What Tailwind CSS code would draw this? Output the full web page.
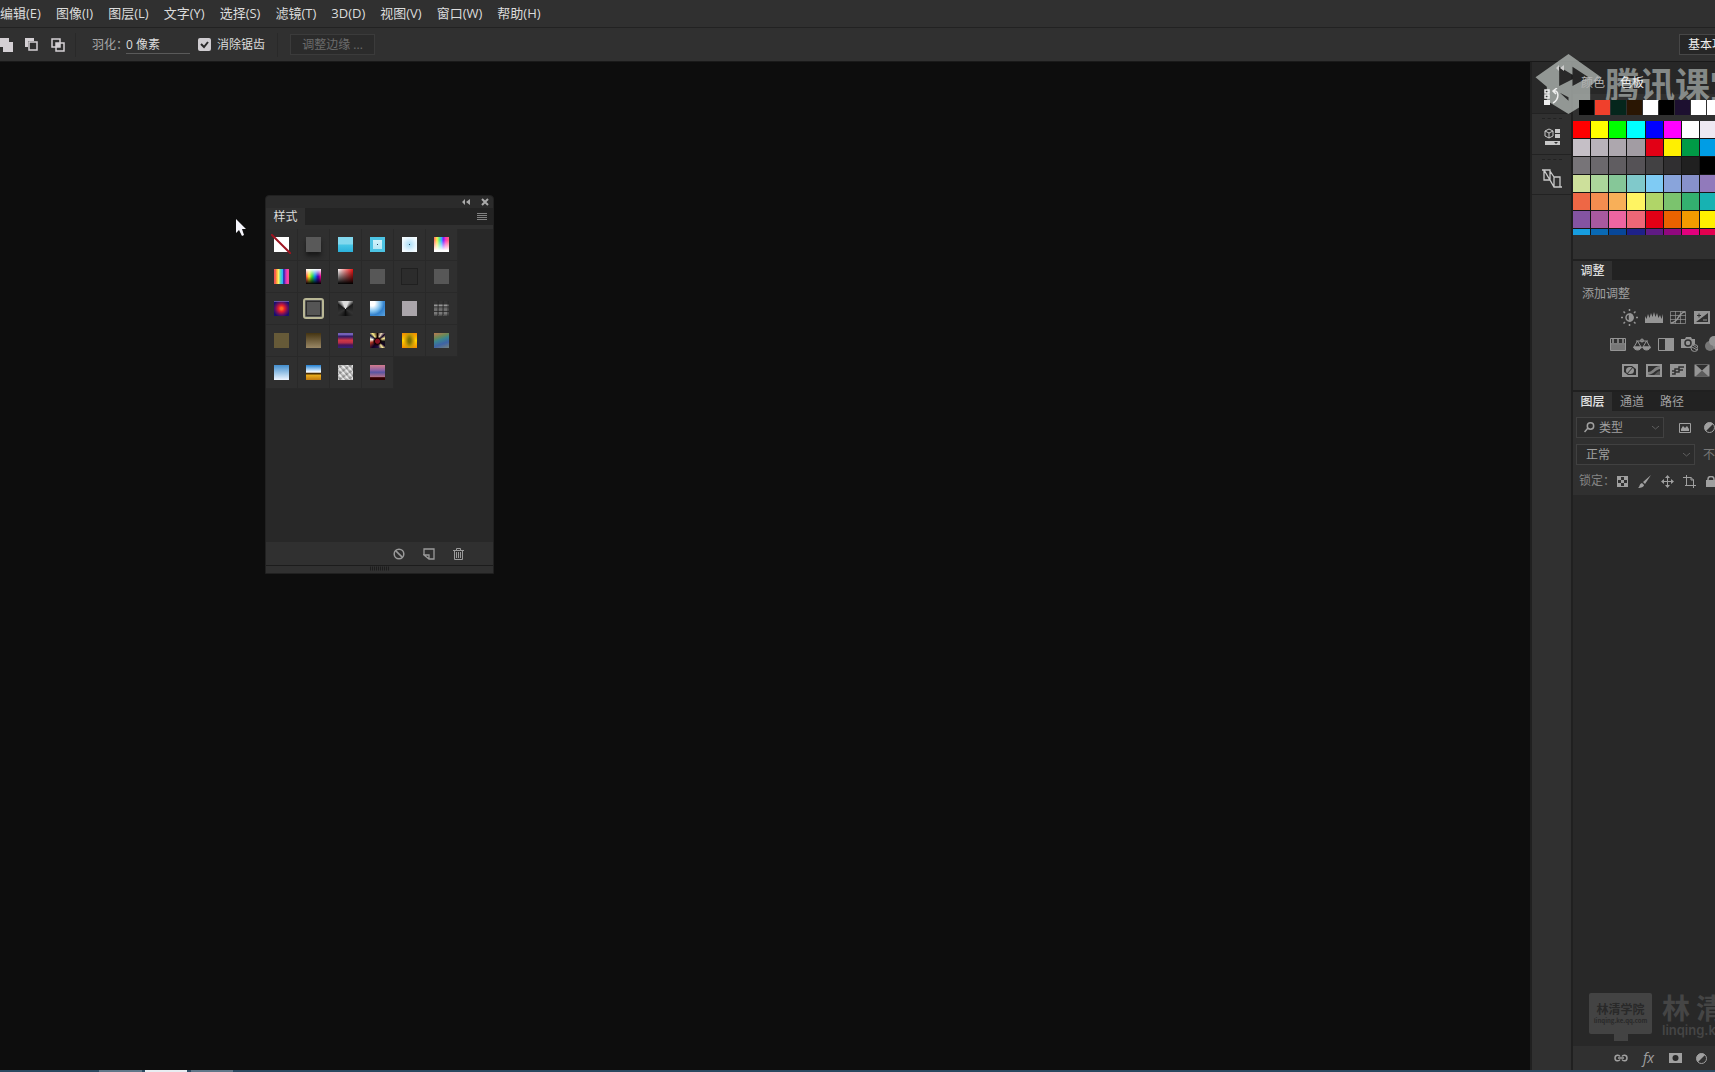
<!DOCTYPE html>
<html lang="zh-CN">
<head>
<meta charset="utf-8">
<title>样式面板</title>
<script src="https://cdn.jsdelivr.net/npm/@tailwindcss/browser@4"></script>
</head>
<body class="flex h-screen flex-col overflow-hidden bg-[#0d0d0d] font-['Open_Sans','Noto_Sans_CJK_SC',sans-serif] text-[12px] leading-4 text-[#dcdcdc] select-none">

<!-- Menu bar -->
<nav class="flex h-7 shrink-0 items-center gap-[15px] whitespace-nowrap border-b border-[#222] bg-[#303030] pb-[2px] text-[13px]">
  <a href="#">编辑(E)</a><a href="#">图像(I)</a><a href="#">图层(L)</a><a href="#">文字(Y)</a><a href="#">选择(S)</a><a href="#">滤镜(T)</a><a href="#">3D(D)</a><a href="#">视图(V)</a><a href="#">窗口(W)</a><a href="#">帮助(H)</a>
</nav>

<!-- Tool options -->
<header class="flex h-[34px] shrink-0 items-center overflow-hidden whitespace-nowrap border-b border-[#191919] bg-[#303030]">
  <div class="flex items-center gap-3 text-[#d4d0d4]">
    <button aria-label="添加到选区" class="h-[14px] w-[13px]"><svg class="h-full w-full" viewBox="0 0 13 14"><path d="M0 0h9v4h4v10H3V9H0z" fill="currentColor"/></svg></button>
    <button aria-label="从选区减去" class="size-[13px]"><svg class="size-full" viewBox="0 0 13 13"><path d="M0 0h9v3H3v6H0z" fill="currentColor"/><path d="M4 4h8v8H4z" fill="none" stroke="currentColor" stroke-width="1.5"/></svg></button>
    <button aria-label="与选区交叉" class="ml-px size-[14px]"><svg class="size-full" viewBox="0 0 14 14"><path d="M1 1h8v8H1zM5 5h8v8H5z" fill="none" stroke="currentColor" stroke-width="1.5"/><path d="M5 5h4v4H5z" fill="currentColor"/></svg></button>
  </div>
  <div class="ml-[10px] h-6 w-px bg-[#292929]"></div>
  <label for="feather" class="ml-[16px] text-[#a8a8a8]">羽化：</label>
  <input id="feather" value="0 像素" class="-ml-[2px] h-[18px] w-[64px] border-b border-[#5a5a5a] bg-transparent outline-none">
  <label class="ml-[8px] flex items-center gap-[6px]">
    <span class="grid size-[13px] place-items-center">
      <input type="checkbox" checked class="col-start-1 row-start-1 size-[13px] appearance-none rounded-[2px] bg-[#cfccd0]">
      <svg class="pointer-events-none col-start-1 row-start-1 size-[11px]" viewBox="0 0 11 11"><path d="M2 5l3 3 4-5" fill="none" stroke="#282828" stroke-width="2"/></svg>
    </span>消除锯齿
  </label>
  <div class="ml-3 h-6 w-px bg-[#292929]"></div>
  <button class="ml-3 h-[21px] w-[85px] border border-[#3b3b3b] bg-[#2b2b2b] text-[#6b6b6b]">调整边缘 ...</button>
  <div class="ml-auto w-[36px] overflow-hidden"><button class="block h-[21px] w-[100px] border border-[#474747] bg-[#262626] pl-2 text-left text-[#eee]">基本功能</button></div>
</header>

<main class="flex min-h-0 flex-1">
  <!-- Canvas -->
  <section class="relative min-w-0 flex-1">
    <svg class="absolute top-[157px] left-[235px] h-[18px] w-3" viewBox="0 0 12 18"><path d="M1 0v14l3-3 3 6 2-1-2-6h4z" fill="#f4f4fa"/></svg>

    <!-- Styles panel -->
    <div class="absolute top-[133px] left-[265px] flex h-[379px] w-[229px] flex-col rounded-t-[4px] border border-[#202020] bg-[#282828]">
      <div class="flex h-[12px] items-center justify-end gap-[11px] rounded-t-[4px] bg-[#2b2b2b] pr-[4px] text-[#aaa]">
        <button aria-label="折叠" class="w-2"><svg class="h-2 w-2" viewBox="0 0 8 8"><path d="M0 4l3-3v6zM4 4l4-3v6z" fill="currentColor"/></svg></button>
        <button aria-label="关闭" class="w-2"><svg class="h-2 w-2" viewBox="0 0 8 8"><path d="M1 1l6 6M7 1L1 7" stroke="currentColor" stroke-width="2"/></svg></button>
      </div>
      <div class="flex h-[17px] items-center justify-between bg-[#232323] pr-[6px]">
        <button class="h-full w-[39px] bg-[#303030] text-[#ddd]">样式</button>
        <button aria-label="面板菜单"><svg class="h-2 w-[10px]" viewBox="0 0 10 8"><path d="M0 .5h10M0 2.5h10M0 4.5h10M0 6.5h10" stroke="#838383"/></svg></button>
      </div>
      <div class="h-1 bg-[#303030]"></div>
      <div id="styles" class="flex flex-1 flex-wrap content-start pr-[34px]"></div>
      <div class="flex h-6 items-center justify-end gap-[18px] border-b border-[#1c1c1c] bg-[#303030] pr-[29px] text-[#9a9a9a]">
        <button aria-label="清除样式"><svg class="size-3" viewBox="0 0 12 12" fill="none" stroke="currentColor" stroke-width="1.5"><circle cx="6" cy="6" r="4.8"/><path d="M2.6 2.6l6.8 6.8"/></svg></button>
        <button aria-label="新建样式"><svg class="size-3" viewBox="0 0 12 12" fill="none" stroke="currentColor" stroke-width="1.3"><path d="M1 7V1h10v10H6L1 7h5v4"/></svg></button>
        <button aria-label="删除样式"><svg class="h-3 w-[11px]" viewBox="0 0 11 12" fill="none" stroke="currentColor"><path d="M0 2.5h11M3.5 2.5v-2h4v2M1.5 2.5v9h8v-9M3.5 4v6M5.5 4v6M7.5 4v6"/></svg></button>
      </div>
      <div class="flex h-[7px] justify-center bg-[#303030]"><svg class="h-[5px] w-5" viewBox="0 0 20 5"><path d="M0 2.5h20" stroke="#1d1d1d" stroke-width="4" stroke-dasharray="1 1"/></svg></div>
    </div>
  </section>

  <!-- Collapsed panel icons -->
  <aside class="flex w-[41px] shrink-0 flex-col border-l-2 border-[#202020] bg-[#303030] text-[#c8c8c8]">
    <div class="flex h-[52px] flex-col items-center border-b border-[#222] bg-[#292929]">
      <button aria-label="展开面板" class="z-10 mt-[2px] ml-4 h-2 text-[#ccc]"><svg class="size-2" viewBox="0 0 8 8"><path d="M0 4l3-3v6zM4 4l4-3v6z" fill="currentColor"/></svg></button>
      <button aria-label="历史记录" class="z-10 mt-4 text-[#eee]"><svg class="h-[18px] w-4" viewBox="0 0 16 18" fill="none" stroke="currentColor" stroke-width="1.5"><path d="M1 2h4v3H1zM1 7h4v3H1z"/><path d="M0 12h6v5H0z" fill="currentColor" stroke="none"/><path d="M9 3c6-2 7 8 0 12M13 0L9 3l3 3"/></svg></button>
    </div>
    <div class="flex h-[41px] flex-col items-center border-b border-[#222]"><div class="mt-1 h-1 w-5 border-t border-dashed border-[#222]"></div><button aria-label="属性" class="mt-[6px]"><svg class="h-[17px] w-4" viewBox="0 0 16 17" fill="none" stroke="currentColor"><path d="M1 3l4-2 4 2v5l-4 2-4-2zM1 3l4 2 4-2M5 5v5"/><path d="M11 1h5v4h-5zM11 6h5v4h-5zM1 13h15v4H1z" fill="currentColor" stroke="none"/><path d="M10 14l2 2 2-2z" fill="#303030" stroke="none"/></svg></button></div>
    <div class="flex h-[40px] flex-col items-center border-b border-[#222]"><div class="mt-1 h-1 w-5 border-t border-dashed border-[#222]"></div><button aria-label="图层复合" class="mt-[6px]"><svg class="h-[19px] w-5" viewBox="0 0 20 19" fill="none" stroke="currentColor" stroke-width="1.3"><path d="M2 1h6v10H2zM12 8h6v10h-6zM0 1h2l10 17M8 2l4 6M8 11l4 7h8"/></svg></button></div>
  </aside>

  <!-- Panels -->
  <aside class="flex w-[144px] shrink-0 flex-col overflow-hidden border-l-2 border-[#202020] bg-[#303030] whitespace-nowrap">
    <section class="flex h-[199px] shrink-0 flex-col border-b-2 border-[#202020]">
      <div class="flex h-8 shrink-0 items-end gap-[15px] bg-[#272727] pb-[3px] pl-[8px]"><button class="z-10 text-[#b4b4b4]">颜色</button><button class="z-10 text-[#eee]">色板</button></div>
      <div id="recent" class="z-10 mt-[6px] ml-[6px] flex h-[15px] shrink-0 gap-px"></div>
      <div id="palette" class="mt-[6px] grid h-[114px] w-[144px] shrink-0 grid-cols-8 auto-rows-[17px] gap-px overflow-hidden bg-[#151515]"></div>
    </section>

    <section class="flex h-[131px] shrink-0 flex-col border-b-2 border-[#202020] text-[#959595]">
      <div class="flex h-[19px] shrink-0 bg-[#222]"><button class="w-[39px] bg-[#303030] font-medium text-[#ddd]">调整</button></div>
      <p class="mt-[6px] pl-[9px] text-[#a0a0a0]">添加调整</p>
      <div class="mt-[7px] ml-[48px] flex h-[17px] items-center gap-2">
        <button aria-label="亮度/对比度"><svg class="size-[17px]" viewBox="0 0 17 17" fill="none" stroke="currentColor" stroke-width="1.5"><circle cx="8.500" cy="8.500" r="3.500"/><path d="M8.500 5v7a3.500 3.500 0 0 0 0-7" fill="currentColor"/><path d="M8.500 0v2M8.500 15v2M0 8.500h2M15 8.500h2M2.500 2.500l1.500 1.500M13 13l1.500 1.500M14.500 2.500L13 4M4 13l-1.500 1.500"/></svg></button>
        <button aria-label="色阶" class="-ml-px"><svg class="h-[11px] w-[18px]" viewBox="0 0 18 11"><path d="M0 11V7V4l1.500 3L3 2l1.500 4L6 1l1.500 4L9 0l1.500 5L12 1l1.500 5L15 3l1.500 4L18 2v9z" fill="currentColor"/></svg></button>
        <button aria-label="曲线" class="-ml-px"><svg class="h-[13px] w-4" viewBox="0 0 16 13" fill="none" stroke="currentColor"><path d="M.5.5h15v12H.5zM5.500 0v13M10.500 0v13M0 4.500h16M0 8.500h16" opacity=".7"/><path d="M1 12c8 0 7-11 14-11" stroke-width="1.500"/></svg></button>
        <button aria-label="曝光度"><svg class="h-[13px] w-4" viewBox="0 0 16 13"><path d="M0 0h16v13H0z" fill="currentColor"/><path d="M14 2v9H2z" fill="#303030"/><path d="M3 4.500h4M5 2.500v4" stroke="#303030"/><path d="M9 9h4" stroke="currentColor"/></svg></button>
      </div>
      <div class="mt-[10px] ml-[37px] flex h-[16px] items-center gap-[7px]">
        <button aria-label="自然饱和度"><svg class="h-[13px] w-4" viewBox="0 0 16 13"><path d="M.5.5h15v12H.5z" fill="none" stroke="currentColor"/><path d="M1 7h14v5H1z" fill="currentColor" opacity=".7"/><path d="M3 1v4M8 1v4M13 1v4M0 6h16" stroke="currentColor" stroke-width="1.500"/></svg></button>
        <button aria-label="色彩平衡"><svg class="h-[13px] w-[18px]" viewBox="0 0 18 13" fill="none" stroke="currentColor"><path d="M3 3h12M4.500 3L1 9h7zM13.500 3L10 9h7zM9 1v3"/><circle cx="9" cy="2.500" r="1.500"/><path d="M.5 9h8c-1 4-7 4-8 0M9.500 9h8c-1 4-7 4-8 0" fill="currentColor"/></svg></button>
        <button aria-label="黑白"><svg class="h-[13px] w-4" viewBox="0 0 16 13"><path d="M.5.5h15v12H.5z" fill="none" stroke="currentColor"/><path d="M7 0h9v13H7z" fill="currentColor"/></svg></button>
        <button aria-label="照片滤镜"><svg class="h-[15px] w-[17px]" viewBox="0 0 17 15"><path d="M0 2h4l1-2h5l1 2h3v9H0z" fill="currentColor"/><circle cx="7" cy="6" r="3" fill="currentColor" stroke="#303030" stroke-width="1.500"/><circle cx="13.500" cy="11" r="3.500" fill="#303030" stroke="currentColor"/><path d="M11 10l5 3M12 8l4 3" stroke="currentColor"/></svg></button>
        <button aria-label="通道混合器" class="shrink-0"><svg class="h-4 w-[18px]" viewBox="0 0 18 16" fill="currentColor"><circle cx="9" cy="5" r="5"/><circle cx="5" cy="10" r="5" opacity=".7"/><circle cx="13" cy="10" r="5" opacity=".7"/></svg></button>
      </div>
      <div class="mt-[10px] ml-[49px] flex h-4 items-center gap-2">
        <button aria-label="反相"><svg class="h-[13px] w-4" viewBox="0 0 16 13"><path d="M1 1h14v11H1z" fill="none" stroke="currentColor" stroke-width="2"/><ellipse cx="8" cy="6.500" rx="4" ry="3.500" fill="currentColor"/><path d="M4 11l8-9" stroke="#303030"/><path d="M10 2h4v3zM2 8v3h4z" fill="currentColor"/></svg></button>
        <button aria-label="色调分离"><svg class="h-[13px] w-4" viewBox="0 0 16 13"><path d="M1 1h14v11H1z" fill="none" stroke="currentColor" stroke-width="2"/><path d="M2 8c5 0 5-5 12-6v3C9 6 8 10 2 11z" fill="currentColor" opacity=".8"/><path d="M8 11c2-1 3-4 6-4v4z" fill="currentColor" opacity=".4"/></svg></button>
        <button aria-label="阈值"><svg class="h-[13px] w-4" viewBox="0 0 16 13"><path d="M0 0h16v13H0z" fill="currentColor"/><path d="M2 7h3V5h4V3h5M2 10h3V8h4V6h4" fill="none" stroke="#303030" stroke-width="1.500"/></svg></button>
        <button aria-label="渐变映射"><svg class="h-[13px] w-4" viewBox="0 0 16 13"><path d="M.5.5h15v12H.5z" fill="currentColor"/><path d="M2 1h12L8 6.500z" fill="#303030"/><path d="M2 12h12L8 6.500z" fill="#5c5c5c"/></svg></button>
      </div>
    </section>

    <section class="flex min-h-0 flex-1 flex-col text-[#a0a0a0]">
      <div class="flex h-[19px] shrink-0 bg-[#222]"><button class="w-[39px] bg-[#303030] font-medium text-[#e4e4e4]">图层</button><button class="w-10">通道</button><button class="w-10">路径</button></div>
      <div class="mt-[6px] ml-[3px] flex h-[21px] shrink-0 items-center">
        <label class="flex h-full w-[88px] shrink-0 items-center border border-[#414141] bg-[#2c2c2c] pr-1 pl-[7px]">
          <svg class="size-[11px] shrink-0" viewBox="0 0 11 11" fill="none" stroke="currentColor" stroke-width="1.500"><circle cx="6.500" cy="4" r="3.200"/><path d="M4 6l-3.500 4"/></svg>
          <select aria-label="类型" class="ml-1 w-12 flex-1 appearance-none bg-transparent"><option>类型</option></select>
          <svg class="h-1 w-[7px]" viewBox="0 0 7 4"><path d="M0 0l3.500 3L7 0" fill="none" stroke="#606060"/></svg>
        </label>
        <button aria-label="像素图层" class="ml-[15px] shrink-0"><svg class="h-[10px] w-3" viewBox="0 0 12 10"><path d="M.5.5h11v9H.5z" fill="none" stroke="currentColor"/><path d="M2 8V6l2-3 2 2 2-2 2 3v2z" fill="currentColor"/></svg></button>
        <button aria-label="调整图层" class="ml-[13px] shrink-0"><svg class="size-[11px]" viewBox="0 0 11 11"><circle cx="5.500" cy="5.500" r="5" fill="none" stroke="currentColor"/><path d="M9 2L2 9a5 5 0 0 1 0-7 5 5 0 0 1 7 0" fill="currentColor"/></svg></button>
      </div>
      <div class="mt-[6px] ml-[3px] flex h-[21px] shrink-0 items-center">
        <label class="flex h-full w-[119px] shrink-0 items-center border border-[#414141] bg-[#2c2c2c] pr-1 pl-[9px]">
          <select aria-label="混合模式" class="w-12 flex-1 appearance-none bg-transparent"><option>正常</option></select>
          <svg class="h-1 w-[7px]" viewBox="0 0 7 4"><path d="M0 0l3.500 3L7 0" fill="none" stroke="#606060"/></svg>
        </label>
        <span class="ml-[8px] text-[#777]">不透明度</span>
      </div>
      <div class="mt-[5px] ml-[6px] flex h-[22px] shrink-0 items-center">
        <span class="w-[38px] shrink-0 text-[#858585]">锁定：</span>
        <div class="flex shrink-0 items-center gap-[10px]">
          <button aria-label="锁定透明像素"><svg class="size-[11px]" viewBox="0 0 11 11"><path d="M0 0h11v11H0z" fill="currentColor"/><path d="M4 1h3v3H4zM1 4h3v3H1zM7 4h3v3H7zM4 7h3v3H4z" fill="#303030"/></svg></button>
          <button aria-label="锁定图像像素"><svg class="size-[13px]" viewBox="0 0 13 13"><path d="M13 0L7 9 5 7zM4 8l2 2c0 2-3 3-6 3 2-1 1-4 4-5" fill="currentColor"/></svg></button>
          <button aria-label="锁定位置"><svg class="size-[13px]" viewBox="0 0 13 13"><path d="M6.500 1v11M1 6.500h11" stroke="currentColor"/><path d="M6.500 0L9 3H4zM6.500 13L4 10h5zM0 6.500L3 4v5zM13 6.500L10 9V4z" fill="currentColor"/></svg></button>
          <button aria-label="锁定画板" class="-ml-px"><svg class="size-[13px]" viewBox="0 0 13 13" fill="none" stroke="currentColor"><path d="M3.500 0v11M0 2.500h8l2.500 2.500v8M2 10.500h11M8 2v3h3"/></svg></button>
          <button aria-label="全部锁定"><svg class="h-[11px] w-[10px]" viewBox="0 0 10 11"><path d="M0 4h10v7H0z" fill="currentColor"/><path d="M2 5V3q0-2.500 3-2.500T8 3v2" fill="none" stroke="currentColor" stroke-width="1.500"/></svg></button>
        </div>
      </div>
      <div class="mt-[3px] flex min-h-0 flex-1 flex-col justify-end bg-[#282828]">
        <!-- Academy mark -->
        <div class="mb-[5px] ml-[16px] flex shrink-0 items-start gap-[10px] text-[#454545]">
          <div class="flex w-[63px] shrink-0 flex-col items-center">
            <div class="h-[41px] w-full rounded-[2px] bg-[#434343] pt-2 text-center font-['Noto_Sans_CJK_SC',sans-serif] font-bold text-[#292929]"><p class="leading-4">林清学院</p><p class="text-[6px] leading-2">linqing.ke.qq.com</p></div>
            <div class="h-[7px] w-[14px] bg-[#434343]"></div>
          </div>
          <div class="font-['Noto_Sans_CJK_SC',sans-serif] font-bold"><p class="flex gap-[6px] text-[28px] leading-[28px]"><span>林</span><span>清</span></p><p class="font-['Inter',sans-serif] text-[13px] leading-[18px] font-semibold">linqing.ke</p></div>
        </div>
      </div>
      <footer class="flex h-[24px] shrink-0 items-center gap-[14px] overflow-hidden bg-[#303030] pl-[41px]">
        <button aria-label="链接图层" class="shrink-0"><svg class="h-2 w-[14px]" viewBox="0 0 14 8" fill="none" stroke="currentColor" stroke-width="1.500"><path d="M6 2.500C5 .5 1 .5 1 4s4 3.500 5 1.500M8 2.500c1-2 5-2 5 1.500S9 7.500 8 5.500M4 4h6"/></svg></button>
        <button aria-label="图层样式" class="w-[13px] shrink-0 text-[14px] italic">fx</button>
        <button aria-label="图层蒙版" class="shrink-0"><svg class="h-[10px] w-[13px]" viewBox="0 0 13 10"><path d="M0 0h13v10H0z" fill="currentColor"/><circle cx="6.500" cy="5" r="3" fill="#282828"/></svg></button>
        <button aria-label="新建调整图层" class="shrink-0"><svg class="size-[11px]" viewBox="0 0 11 11"><circle cx="5.500" cy="5.500" r="5" fill="none" stroke="currentColor"/><path d="M9 2L2 9a5 5 0 0 1 0-7 5 5 0 0 1 7 0" fill="currentColor"/></svg></button>
      </footer>
    </section>
  </aside>
</main>

<!-- Top edge of the taskbar -->
<div class="flex h-[2px] shrink-0 bg-[#2b4a61] pl-[99px]"><span class="w-[43px] bg-[#61788a]"></span><span class="ml-[3px] w-[42px] bg-[#e8edf2]"></span><span class="ml-[4px] w-[42px] bg-[#61788a]"></span></div>

<!-- Broadcast watermark -->
<div class="pointer-events-none absolute top-[54px] right-0 flex w-[180px] items-start overflow-hidden whitespace-nowrap text-[#a4aaa7]/75">
  <svg class="h-[60px] w-[67px] shrink-0" viewBox="0 0 200 180"><path fill-rule="evenodd" d="M100 0l98 70-33 26v44l-65 40-65-40v-42L1 70zM72 38v58l40-20v20l48-26-48-32v24zM74 116l26 24v-10z" fill="#a4aaa7" fill-opacity=".85"/></svg>
  <span class="ml-[3px] font-['Noto_Sans_CJK_SC',sans-serif] text-[35px] leading-[58px] font-bold">腾讯课堂</span>
</div>

<script>
const fill = (id, items, cls) => {
  const host = document.getElementById(id);
  items.forEach(([name, bg]) => {
    const b = document.createElement('button');
    b.className = cls; b.setAttribute('aria-label', name); b.style.background = bg;
    host.append(b);
  });
};
const solid = s => s.split(' ').map(c => [c, c]);
fill('recent', solid('#000 #f0402c #05261c #2a1603 #fff #000 #1d1030 #fff #fff'), 'h-full w-[15px] shrink-0');
fill('palette', solid(
  '#f00 #ff0 #0f0 #0ff #00f #f0f #fff #eee8f2 ' +
  '#c5bfc6 #b9b3ba #ada7ae #a29ca3 #e20015 #fff000 #009a46 #009de5 ' +
  '#777478 #6b686c #605d61 #555256 #424143 #302f31 #202020 #000 ' +
  '#cde09b #acd69b #86c798 #80c9cb #7fcbf4 #89a4db #8791cb #917abb ' +
  '#ee6745 #f38d50 #f8af58 #fff462 #b0d568 #7bc36e #33b06f #17b2b2 ' +
  '#8454a2 #a8599f #ed65a1 #ee6777 #e20015 #ea6200 #f39a00 #fff000 ' +
  '#179ddf #0969b4 #074799 #1e2189 #5f1b84 #91087f #e2007d #e3004f'), 'block');

const host = document.getElementById('styles');
[
  ['无样式', 'linear-gradient(#fff,#fff)'],
  ['投影', '#595959'],
  ['天蓝', 'linear-gradient(#82d8ee 0 45%,#45c5e5 55%,#2bb1db)'],
  ['蓝色玻璃', 'linear-gradient(#246,#246) center/1px 1px no-repeat,linear-gradient(#d0f2fa,#b4e8f6) center/9px 9px no-repeat,#4cc4e4'],
  ['白色玻璃', 'linear-gradient(#246,#246) center/1px 1px no-repeat,radial-gradient(#a8ddf6,#e6f6ff 60%,#fff)'],
  ['彩虹渐隐', 'linear-gradient(#fff0 20%,#fff 90%),linear-gradient(90deg,#f66,#fe4 20%,#5e8 35%,#3af 50%,#72f 62%,#f3b 78%,#f66)'],
  ['光谱', 'linear-gradient(90deg,#e55 0 8%,#fa3 18%,#fe6 30%,#4db,#3af 58%,#229 65%,#b3c 78%,#f49 88%,#e4a)'],
  ['彩虹', 'linear-gradient(#fff,#fff0 50%,#000),linear-gradient(90deg,#f44,#fe2,#3d3,#08e,#40b,#f08)'],
  ['红色', 'linear-gradient(#0000,#000),linear-gradient(90deg,#fff,#e11)'],
  ['灰色', '#575757'], ['描边', '#2c2c2c'], ['灰色叠加', '#575757'],
  ['日落', 'linear-gradient(#8878c0,#8878c000 10%),radial-gradient(#f62 10%,#e11d2c 30%,#71105c 55%,#171070 80%)'],
  ['选中样式', '#555'],
  ['暗影', 'conic-gradient(at 50% 55%,#ddd 0 20deg,#888 38deg,#1a1a1a 55deg,#333 120deg,#0d0d0d 180deg,#333 240deg,#1a1a1a 305deg,#888 322deg,#ddd 340deg)'],
  ['水滴', 'radial-gradient(circle at 15% 15%,#fff 15%,#7fc0ee 45%,#3381cc 65%,#5ba4e0)'],
  ['浅灰', '#aaa5aa'],
  ['噪点', 'repeating-linear-gradient(92deg,#3330 0 3px,#2228 4px 5px),linear-gradient(#333,#333 20%,#aaa 28%,#444 38%,#666 50%,#777 62%,#333 70%,#888 78%,#444)'],
  ['橄榄', '#665a38'],
  ['古铜', 'linear-gradient(#443412,#9a8866)'],
  ['条纹', 'linear-gradient(#7461b8 0 10%,#301c68 22%,#64205c 32%,#d13845 48%,#b52e49 65%,#461457 80%,#302478)'],
  ['拼贴', 'radial-gradient(circle at 50% 55%,#812 2px,#100 3px,#1000 5px),conic-gradient(#100,#edb 8%,#102 14%,#fe9 20%,#111 27%,#102 35%,#fe9 40%,#214 48%,#102 60%,#a32 70%,#ffe 78%,#113 85%,#fe8 90%,#100)'],
  ['黄金', 'radial-gradient(ellipse 40% 70%,#7f7405 20%,#c79a05 60%,#fd00),linear-gradient(#f08a00,#ffd200 50%,#f08a00)'],
  ['极光', 'linear-gradient(160deg,#bd7950,#6b8957 28%,#3a8590 45%,#3d63a5 68%,#74817c)'],
  ['蓝天', 'linear-gradient(#428dcc,#a8cdec 60%,#eef5ff)'],
  ['地平线', 'linear-gradient(#227fd0,#d9edff 40%,#fff 48%,#372000 55%,#e6a91d 70%,#c07910)'],
  ['纹理', 'repeating-linear-gradient(50deg,#fff6 0 1px,#5556 2px,#fff0 4px),repeating-linear-gradient(-35deg,#ddd 0 2px,#999 3px,#ccc 5px)'],
  ['黄昏', 'linear-gradient(#d47c8d,#8b62a3 35%,#5755a3 48%,#b47089 80%,#300 84%)'],
].forEach(([name, bg], i) => {
  const b = document.createElement('button');
  b.setAttribute('aria-label', name);
  b.className = 'relative flex size-8 items-center justify-center border-r border-b border-[#292929] bg-[#2f2f2f]';
  const s = document.createElement('span');
  s.className = i === 13 ? 'size-[21px] rounded-[3px] border-2 border-[#b9b795] outline -outline-offset-4 outline-[#2a2a2a]'
    : i === 1 ? 'size-[15px] shadow-[0_4px_4px_#1a1a1a]'
    : i === 10 ? 'size-[17px] border border-[#202020]' : 'size-[15px]';
  s.style.background = bg;
  b.append(s);
  if (i === 0) b.insertAdjacentHTML('beforeend', '<svg class="absolute top-[5px] left-[5px] size-5" viewBox="0 0 20 20"><path d="M0 0l20 20" stroke="#9c1420" stroke-width="2"/></svg>');
  host.append(b);
});
</script>
</body>
</html>
